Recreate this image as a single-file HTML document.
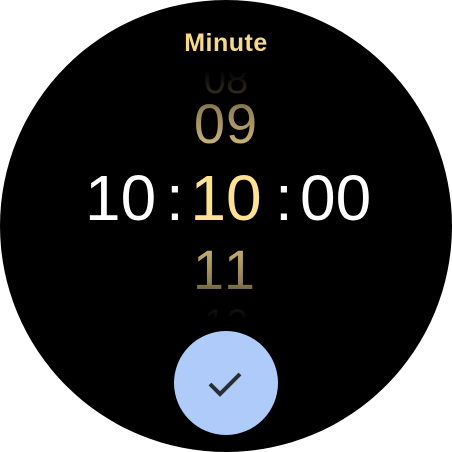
<!DOCTYPE html>
<html><head><style>
html,body{margin:0;padding:0;background:#fff;}
.w{position:relative;width:452px;height:452px;border-radius:50%;background:#000;overflow:hidden;font-family:"Liberation Sans",sans-serif;}
.t{position:absolute;white-space:nowrap;line-height:1;}
.title{left:0;width:452px;text-align:center;top:31px;font-size:25px;font-weight:bold;color:#f6d98a;letter-spacing:0.5px;}
.big{font-size:64px;top:166px;color:#fff;}
.col{position:absolute;left:176px;width:100px;top:60px;height:270px;
 -webkit-mask-image:linear-gradient(#0000 4%,#000a 18%,#000 35%,#000 65%,#000a 82%,#0000 96%);
 mask-image:linear-gradient(#0000 4%,#000a 18%,#000 35%,#000 65%,#000a 82%,#0000 96%);}
.col div{position:absolute;left:0;width:100px;text-align:center;line-height:1;}
.btn{position:absolute;left:174px;top:331px;width:104px;height:104px;border-radius:50%;background:#aecbfa;}
</style></head><body>
<div class="w">
 <div class="t title">Minute</div>
 <div class="col">
  <div style="top:0px;font-size:40px;color:#7a6d4f;">08</div>
  <div style="top:36px;font-size:56px;color:#d8c07e;letter-spacing:1px;">09</div>
  <div style="top:106px;font-size:64px;color:#fde293;">10</div>
  <div style="top:182px;font-size:56px;color:#d8c07e;letter-spacing:4px;">11</div>
  <div style="top:244px;font-size:40px;color:#7a6d4f;">12</div>
 </div>
 <div class="t big" style="left:85px;">10</div>
 <div class="t big" style="left:166px;">:</div>
 <div class="t big" style="left:275px;">:</div>
 <div class="t big" style="left:300px;">00</div>
 <div class="btn">
  <svg width="104" height="104" viewBox="0 0 104 104"><path d="M36 53 L46 63 L66 43" fill="none" stroke="#2a2d33" stroke-width="4"/></svg>
 </div>
</div>
</body></html>
